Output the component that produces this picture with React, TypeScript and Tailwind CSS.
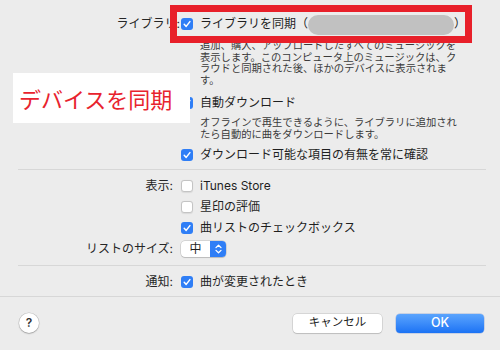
import React from "react";

function Check({ checked }: { checked?: boolean }) {
  if (!checked) {
    return <span className="w-[12px] h-[12px] rounded-[3px] bg-white border border-[#c4c4c4] shadow-[0_0.5px_1px_rgba(0,0,0,0.08)] shrink-0" />;
  }
  return (
    <span className="w-[12px] h-[12px] rounded-[3px] bg-[#2f7ef6] flex items-center justify-center shrink-0">
      <svg width="10" height="10" viewBox="0 0 10 10">
        <path d="M2.2 5.2 L4.2 7.4 L7.9 2.6" fill="none" stroke="white" strokeWidth="1.5" strokeLinecap="round" strokeLinejoin="round" />
      </svg>
    </span>
  );
}

function Row({ label, className, children }: { label?: React.ReactNode; className: string; children: React.ReactNode }) {
  return (
    <div className={`flex items-center ${className}`}>
      <div className="w-[173px] text-right text-[12px] text-[#262626] whitespace-nowrap">{label}</div>
      <div className="ml-[8px] flex items-center">{children}</div>
    </div>
  );
}

function Item({ checked, text }: { checked?: boolean; text: string }) {
  return (
    <>
      <Check checked={checked} />
      <span className="ml-[7px] text-[12px] text-[#1f1f1f] whitespace-nowrap">{text}</span>
    </>
  );
}

export default function App() {
  return (
    <div className="relative w-[500px] h-[350px] overflow-hidden bg-[#ececec] font-['Inter','Noto_Sans_CJK_JP',sans-serif]">
      <div className="pt-[14px]">
        <Row label={<span className="inline-block mr-[-7px]">ライブラリ:</span>} className="h-[20px]">
          <Check checked />
          <span className="ml-[7px] text-[12px] text-[#1f1f1f] whitespace-nowrap">ライブラリを同期（</span>
          <span className="w-[146px] h-[20px] rounded-full bg-[#c1c1c1] mt-[2px]" />
          <span className="text-[12px] text-[#1f1f1f]">）</span>
        </Row>
        <div className="ml-[200px] mt-[6px] text-[10.3px] leading-[11.5px] text-[#3a3a3a] whitespace-nowrap">
          追加、購入、アップロードしたすべてのミュージックを<br />
          表示します。このコンピュータ上のミュージックは、ク<br />
          ラウドと同期された後、ほかのデバイスに表示されま<br />
          す。
        </div>
        <Row className="mt-[7px] h-[20px]">
          <Item checked text="自動ダウンロード" />
        </Row>
        <div className="ml-[200px] mt-[4px] text-[10.3px] leading-[11.5px] text-[#3a3a3a] whitespace-nowrap">
          オフラインで再生できるように、ライブラリに追加され<br />
          たら自動的に曲をダウンロードします。
        </div>
        <Row className="mt-[5px] h-[20px]">
          <Item checked text="ダウンロード可能な項目の有無を常に確認" />
        </Row>
        <div className="mt-[4px] ml-[18px] mr-[14px] h-px bg-[#d7d7d7]" />
        <Row label="表示:" className="mt-[5px] h-[21px]">
          <Item text="iTunes Store" />
        </Row>
        <Row className="h-[21px]">
          <Item text="星印の評価" />
        </Row>
        <Row className="h-[21px]">
          <Item checked text="曲リストのチェックボックス" />
        </Row>
        <Row label="リストのサイズ:" className="h-[21px]">
          <div className="flex h-[16px] w-[45px] rounded-[4px] bg-white overflow-hidden shadow-[0_0_0_0.5px_rgba(0,0,0,0.2),0_1px_1px_rgba(0,0,0,0.12)]">
            <div className="flex-1 flex items-center justify-center text-[12px] text-[#1f1f1f]">中</div>
            <div className="w-[16px] bg-[#2f7ef6] flex items-center justify-center">
              <svg width="9" height="12" viewBox="0 0 9 12">
                <path d="M2 4.6 L4.5 2.2 L7 4.6 M2 7.4 L4.5 9.8 L7 7.4" fill="none" stroke="white" strokeWidth="1.3" strokeLinecap="round" strokeLinejoin="round" />
              </svg>
            </div>
          </div>
        </Row>
        <div className="mt-[6px] ml-[18px] mr-[14px] h-px bg-[#d7d7d7]" />
        <Row label="通知:" className="mt-[6px] h-[20px]">
          <Item checked text="曲が変更されたとき" />
        </Row>
        <div className="mt-[4px] h-px bg-[#d7d7d7]" />
        <div className="flex items-center justify-between pt-[16px] pl-[19px] pr-[16px]">
          <div className="w-[20px] h-[20px] rounded-full bg-white flex items-center justify-center text-[12px] font-semibold text-[#333] shadow-[0_0_0_0.5px_rgba(0,0,0,0.18),0_1px_1.5px_rgba(0,0,0,0.2)]">?</div>
          <div className="flex items-center gap-[14px]">
            <div className="w-[89px] h-[19px] rounded-[4px] bg-white flex items-center justify-center text-[11.5px] text-[#222] shadow-[0_0_0_0.5px_rgba(0,0,0,0.18),0_1px_1px_rgba(0,0,0,0.12)]">キャンセル</div>
            <div className="w-[88px] h-[19px] rounded-[4px] bg-gradient-to-b from-[#5aa4fd] to-[#1a72f4] flex items-center justify-center text-[12.5px] text-white font-medium shadow-[0_0_0_0.5px_rgba(0,60,180,0.3)]">OK</div>
          </div>
        </div>
      </div>

      {/* annotations over the dialog */}
      <div className="absolute left-[170px] top-[5px] w-[302px] h-[38px] border-[7px] border-[#e8202a] pointer-events-none" />
      <div className="absolute left-[13px] top-[73px] w-[177px] h-[50px] bg-white flex items-center pl-[6px]">
        <span className="text-[22px] text-[#e8232e] whitespace-nowrap font-['Noto_Sans_CJK_JP',sans-serif]">デバイスを同期</span>
      </div>
    </div>
  );
}
